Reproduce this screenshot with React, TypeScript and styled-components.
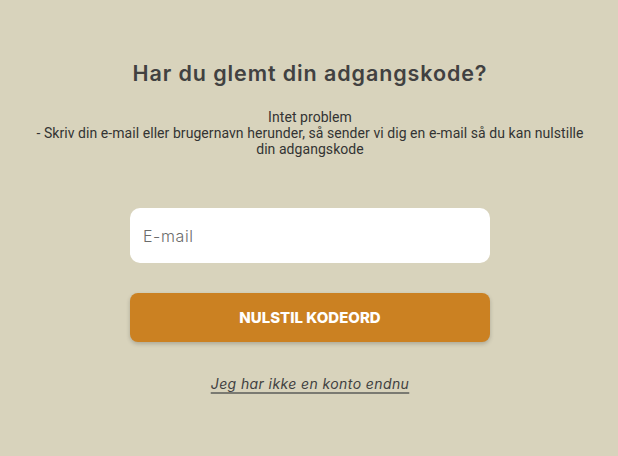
import { createGlobalStyle, styled } from 'styled-components';

const Global = createGlobalStyle`
  html, body {
    margin: 0;
    padding: 0;
    background: #d8d3bc;
  }
  body {
    font-family: Roboto, "Liberation Sans", sans-serif;
  }
`

const Page = styled.main`
  width: 618px;
  height: 456px;
  display: flex;
  flex-direction: column;
  align-items: center;
  padding: 57px 0 0 2px;
  box-sizing: border-box;
  color: #414141;
`

const Title = styled.h1`
  margin: 0;
  font-family: Inter, "Open Sans", sans-serif;
  font-weight: 600;
  font-size: 21.5px;
  line-height: 32px;
  letter-spacing: 0.9px;
  color: #414141;
`

const Lead = styled.p`
  margin: 20px 0 0;
  font-size: 14px;
  line-height: 16px;
  letter-spacing: 0.06px;
  text-align: center;
  color: #333;
  padding: 0 30px;
`

const Form = styled.form`
  width: 360px;
  margin-top: 51px;
  display: flex;
  flex-direction: column;
  gap: 30px;
`

const Input = styled.input`
  height: 55px;
  border: none;
  border-radius: 10px;
  background: #fff;
  padding: 0 13px;
  font-family: Inter, "Open Sans", sans-serif;
  font-weight: 300;
  font-size: 16px;
  letter-spacing: 0.6px;
  color: #333;
  outline: none;
  &::placeholder {
    color: #6b6b6b;
  }
`

const Submit = styled.button`
  height: 49px;
  border: none;
  border-radius: 8px;
  background: #cb8122;
  color: #fff;
  font-family: Inter, "Open Sans", sans-serif;
  font-weight: 800;
  font-size: 15px;
  text-transform: uppercase;
  box-shadow: 0 2px 4px rgba(0, 0, 0, 0.2);
  cursor: pointer;
`

const SignupLink = styled.a`
  margin-top: 33px;
  font-family: Inter, "Open Sans", sans-serif;
  font-style: italic;
  font-size: 14px;
  letter-spacing: 0.4px;
  color: #414141;
  text-decoration: underline;
  text-decoration-color: #7a7a72;
  text-decoration-thickness: 2px;
  text-underline-offset: 3px;
`

export default function App() {
  return (
    <>
      <Global />
      <Page>
        <Title>Har du glemt din adgangskode?</Title>
        <Lead>
          Intet problem
          <br />
          - Skriv din e-mail eller brugernavn herunder, så sender vi dig en e-mail så du kan nulstille din adgangskode
        </Lead>
        <Form onSubmit={e => e.preventDefault()}>
          <Input type="email" placeholder="E-mail" />
          <Submit type="submit">Nulstil kodeord</Submit>
        </Form>
        <SignupLink href="#">Jeg har ikke en konto endnu</SignupLink>
      </Page>
    </>
  )
}
